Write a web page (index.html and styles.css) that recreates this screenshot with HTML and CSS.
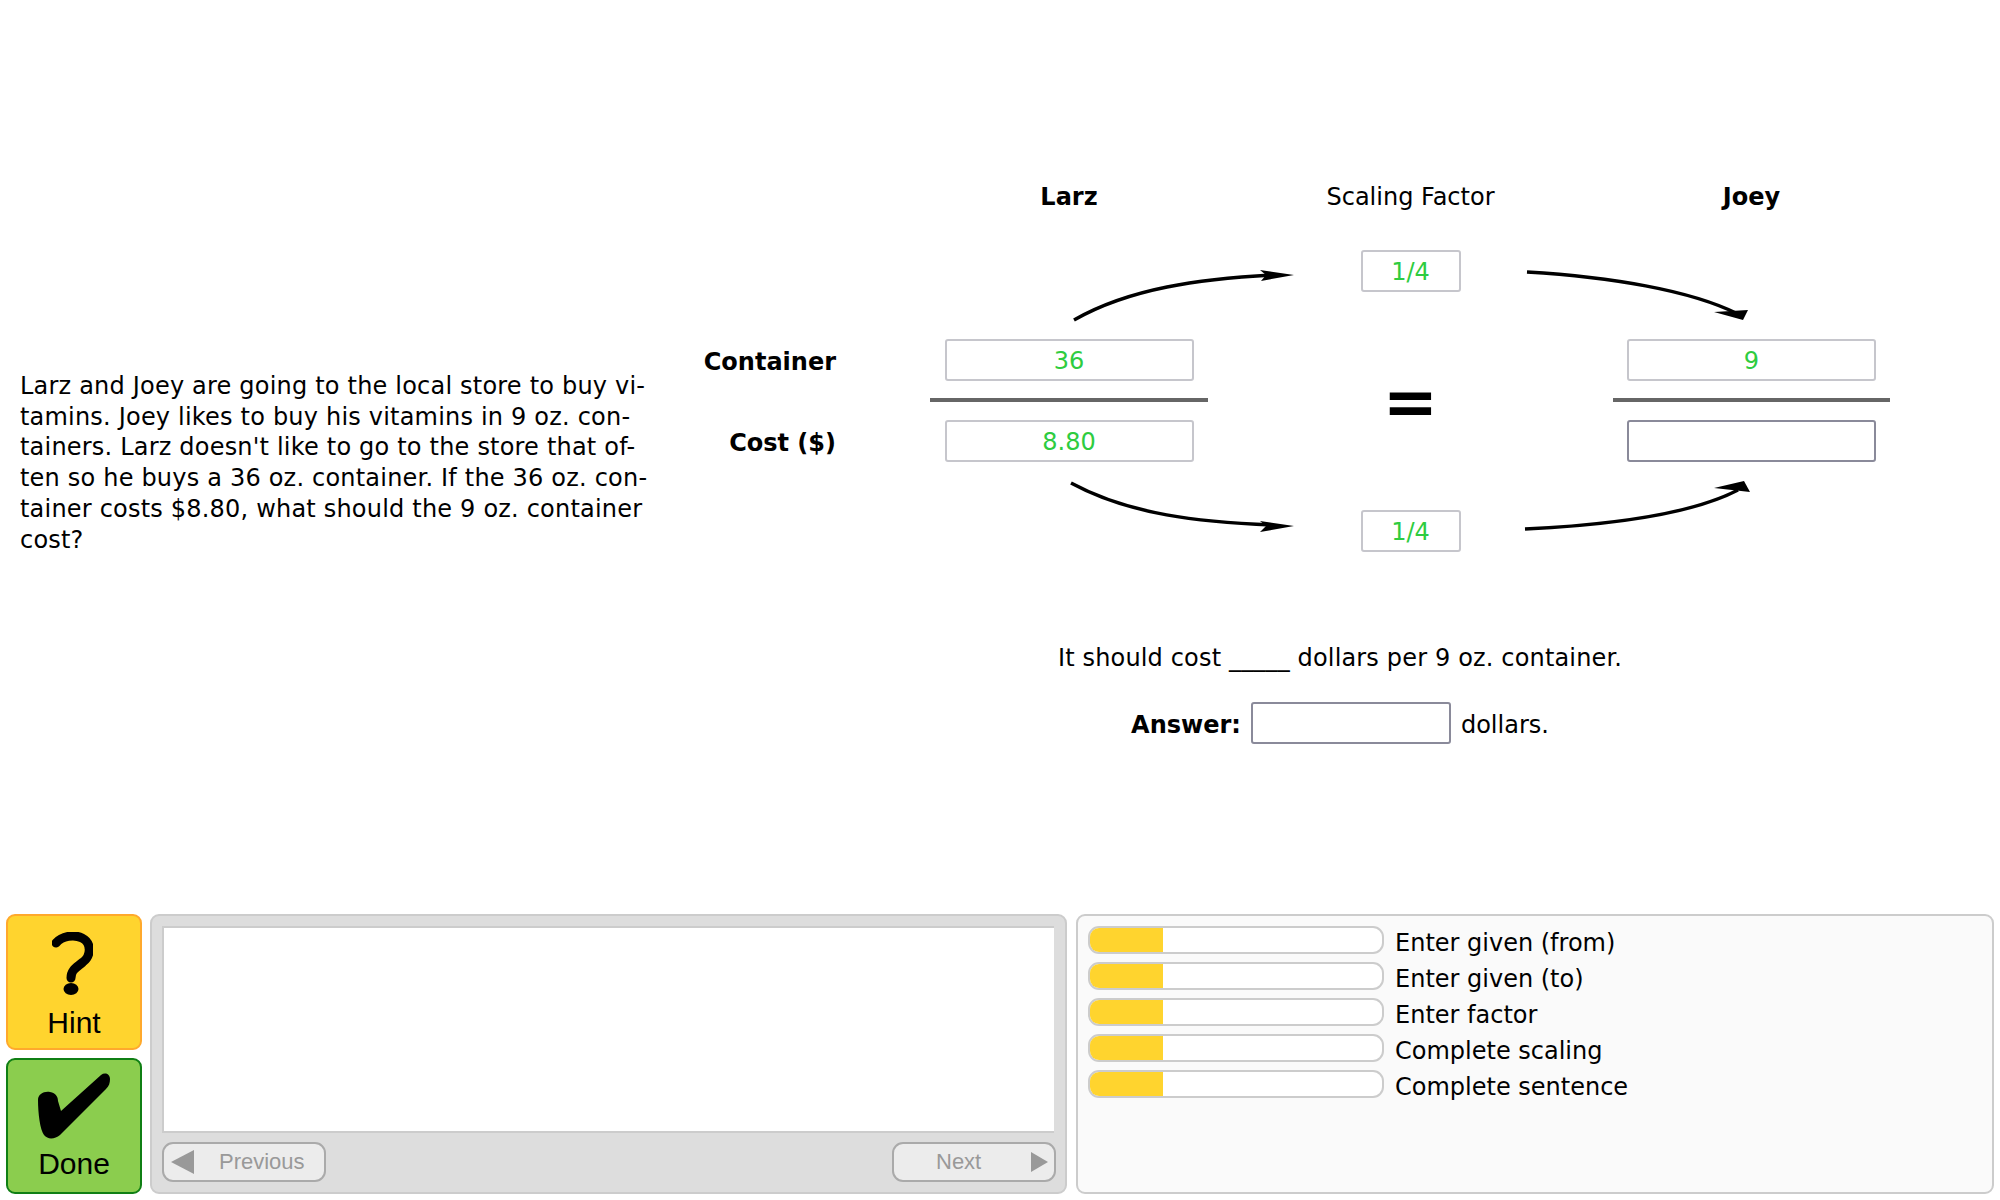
FILE: index.html
```html
<!DOCTYPE html>
<html>
<head>
	<meta charset="UTF-8">
	<title>Larz and Joey</title>
	<link rel="stylesheet" href="styles.css">
</head>
<body>
	<div class="problem">
		<div class="question">
			Larz and Joey are going to the local store to buy vi-<br>
			tamins. Joey likes to buy his vitamins in 9 oz. con-<br>
			tainers. Larz doesn't like to go to the store that of-<br>
			ten so he buys a 36 oz. container. If the 36 oz. con-<br>
			tainer costs $8.80, what should the 9 oz. container<br>
			cost?
		</div>
		<div class="work">
			<!-- arrows sit on top of the table -->
			<svg class="arrows" width="1320" height="914" viewBox="0 0 1320 914">
				<path class="arrow_line" d="M394 320 C450 288 520 279 592 275"/>
				<polygon points="614,275 580,270 586,275 581,281"/>
				<path class="arrow_line" d="M847 272 C930 277 1010 290 1058 314"/>
				<polygon points="1034,312 1068,310 1063,320"/>
				<path class="arrow_line" d="M391 483 C450 515 520 522 592 525"/>
				<polygon points="614,526 580,521 586,526 580,532"/>
				<path class="arrow_line" d="M845 529 C930 525 1010 515 1058 490"/>
				<polygon points="1034,488 1064,481 1070,492"/>
			</svg>
			<div class="table">
				<div class="head left_col">Larz</div>
				<div class="head_plain mid_col">Scaling Factor</div>
				<div class="head right_col">Joey</div>

				<div class="factor_row mid_col"><input class="cell small" value="1/4" readonly></div>

				<div class="row_label num_row">Container</div>
				<div class="left_col num_row"><input class="cell" value="36" readonly></div>
				<div class="equals">=</div>
				<div class="right_col num_row"><input class="cell" value="9" readonly></div>

				<div class="left_col rule_row"><div class="rule"></div></div>
				<div class="right_col rule_row"><div class="rule"></div></div>

				<div class="row_label den_row">Cost ($)</div>
				<div class="left_col den_row"><input class="cell" value="8.80" readonly></div>
				<div class="right_col den_row"><input class="cell open" value=""></div>

				<div class="factor_row2 mid_col"><input class="cell small" value="1/4" readonly></div>
			</div>
			<div class="sentence">It should cost _____ dollars per 9 oz. container.</div>
			<div class="answer">
				<b>Answer:</b>
				<input class="cell open answer_box" value="">
				<span>dollars.</span>
			</div>
		</div>
	</div>

	<div class="toolbar">
		<div class="buttons">
			<div class="big_button hint">
				<svg class="hint_icon" width="41" height="64" viewBox="0 0 41 64">
					<path d="M4 11 C10 4 22 2 30 6 C40 11 39 24 31 30 C24 36 19 38 19 46" fill="none" stroke="#000" stroke-width="9" stroke-linecap="round"/>
					<ellipse cx="19" cy="57" rx="7.5" ry="6"/>
				</svg>
				<span>Hint</span>
			</div>
			<div class="big_button done">
				<svg class="done_icon" width="72" height="66" viewBox="0 0 72 66">
					<path d="M0 27 C0 21 6 18 12 19 C18 20 20 24 20 28 L23 38 L63 2 C67 -1 72 1 72 6 C72 10 71 13 68 16 L22 62 C17 66 10 67 6 62 C2 57 0 40 0 27 Z"/>
				</svg>
				<span>Done</span>
			</div>
		</div>
		<div class="hint_panel">
			<div class="hint_text"></div>
			<div class="hint_nav">
				<div class="nav_button prev"><i class="tri_left"></i><span>Previous</span></div>
				<div class="nav_button next"><span>Next</span><i class="tri_right"></i></div>
			</div>
		</div>
		<div class="skills">
			<div class="skill"><div class="bar"><div class="fill" style="width:25%"></div></div><span>Enter given (from)</span></div>
			<div class="skill"><div class="bar"><div class="fill" style="width:25%"></div></div><span>Enter given (to)</span></div>
			<div class="skill"><div class="bar"><div class="fill" style="width:25%"></div></div><span>Enter factor</span></div>
			<div class="skill"><div class="bar"><div class="fill" style="width:25%"></div></div><span>Complete scaling</span></div>
			<div class="skill"><div class="bar"><div class="fill" style="width:25%"></div></div><span>Complete sentence</span></div>
		</div>
	</div>
</body>
</html>
```

FILE: styles.css
```css
html, body {
	margin:0;
	padding:0;
	background-color:white;
	color:black;
	font-family:"DejaVu Sans", sans-serif;
	font-size:24px;
}
.problem {
	display:flex;
	height:914px;
}
.question {
	width:680px;
	box-sizing:border-box;
	padding-left:20px;
	padding-top:371px;
	line-height:30.7px;
	letter-spacing:0.2px;
	white-space:nowrap;
}
.work {
	position:relative;
	width:1320px;
	padding-top:176px;
	box-sizing:border-box;
}
.arrows {
	position:absolute;
	top:0;
	left:0;
}
.arrow_line {
	fill:none;
	stroke:black;
	stroke-width:3.4;
}
.table {
	display:grid;
	grid-template-columns:156px 94px 278px 405px 277px;
	grid-template-rows:40px 34px 41px 48px 42px 17px 4px 18px 42px 48px 41px;
	text-align:center;
}
.head {
	grid-row:1;
	font-weight:bold;
	line-height:42px;
}
.head_plain {
	grid-row:1;
	line-height:42px;
}
.left_col { grid-column:3; }
.mid_col { grid-column:4; }
.right_col { grid-column:5; }
.factor_row { grid-row:3; }
.factor_row2 { grid-row:11; }
.num_row { grid-row:5; }
.rule_row { grid-row:7; }
.den_row { grid-row:9; }
.row_label {
	grid-column:1;
	text-align:right;
	font-weight:bold;
	line-height:46px;
	white-space:nowrap;
}
.equals {
	grid-column:4;
	grid-row:5 / 10;
	align-self:center;
	padding-top:5px;
	font-size:66px;
	font-weight:bold;
	line-height:62px;
}
.cell {
	display:block;
	width:249px;
	height:42px;
	margin:0 auto;
	padding:2px 0 0 0;
	box-sizing:border-box;
	border:2px solid #c6c6cc;
	border-radius:3px;
	background-color:white;
	color:#2ecc40;
	font-family:inherit;
	font-size:24px;
	text-align:center;
	outline:none;
}
.small {
	width:100px;
}
.open {
	border-color:#8a8a9a;
}
.rule {
	height:4px;
	background-color:#666;
}
.sentence {
	margin-top:92px;
	text-align:center;
	line-height:30px;
	letter-spacing:0.16px;
}
.answer {
	display:flex;
	justify-content:center;
	align-items:center;
	gap:10px;
	margin-top:29px;
}
.answer b, .answer span {
	padding-top:4px;
}
.answer_box {
	width:200px;
	margin:0;
}
.toolbar {
	display:flex;
	padding-left:6px;
	height:280px;
}
.buttons {
	display:flex;
	flex-direction:column;
	gap:8px;
	width:136px;
	margin-right:8px;
}
.big_button {
	height:136px;
	box-sizing:border-box;
	border:2px solid;
	border-radius:9px;
	display:flex;
	flex-direction:column;
	align-items:center;
	font-family:"Liberation Sans", sans-serif;
	font-size:30px;
}
.hint {
	background-color:#ffd42e;
	border-color:#ffa92c;
}
.done {
	background-color:#8bcd4e;
	border-color:#0f7f14;
}
.hint_icon {
	margin-top:16px;
	margin-left:-4px;
}
.done_icon {
	margin-top:13px;
	margin-left:-1px;
}
.big_button span {
	margin-top:10px;
	line-height:34px;
}
.done span {
	margin-top:8px;
}
.hint_panel {
	width:917px;
	box-sizing:border-box;
	margin-right:9px;
	padding:10px;
	background-color:#ddd;
	border:2px solid #ccc;
	border-radius:9px;
}
.hint_text {
	height:207px;
	box-sizing:border-box;
	margin-right:1px;
	background-color:white;
	border:2px solid #ccc;
	border-right:0;
}
.hint_nav {
	display:flex;
	justify-content:space-between;
	margin-top:9px;
	margin-right:-1px;
}
.nav_button {
	display:flex;
	align-items:center;
	width:164px;
	height:40px;
	box-sizing:border-box;
	background-color:#ececec;
	border:2px solid #aaa;
	border-radius:11px;
	color:#999;
	font-family:"Liberation Sans", sans-serif;
	font-size:22px;
}
.prev {
	padding-left:7px;
	gap:25px;
}
.next {
	justify-content:space-between;
	padding-left:42px;
	padding-right:6px;
}
.tri_left {
	border-style:solid;
	border-width:12px 23px 12px 0;
	border-color:transparent #999 transparent transparent;
}
.tri_right {
	border-style:solid;
	border-width:10px 0 10px 17px;
	border-color:transparent transparent transparent #999;
}
.skills {
	width:918px;
	box-sizing:border-box;
	padding:10px 10px;
	background-color:#fafafa;
	border:2px solid #ccc;
	border-radius:9px;
}
.skill {
	display:flex;
	align-items:center;
	height:28px;
	margin-bottom:8px;
	white-space:nowrap;
}
.skill span {
	padding-top:6px;
}
.bar {
	width:296px;
	height:28px;
	box-sizing:border-box;
	margin-right:11px;
	background-color:white;
	border:2px solid #ccc;
	border-radius:11px;
	overflow:hidden;
}
.fill {
	height:100%;
	background-color:#ffd42e;
}
```
